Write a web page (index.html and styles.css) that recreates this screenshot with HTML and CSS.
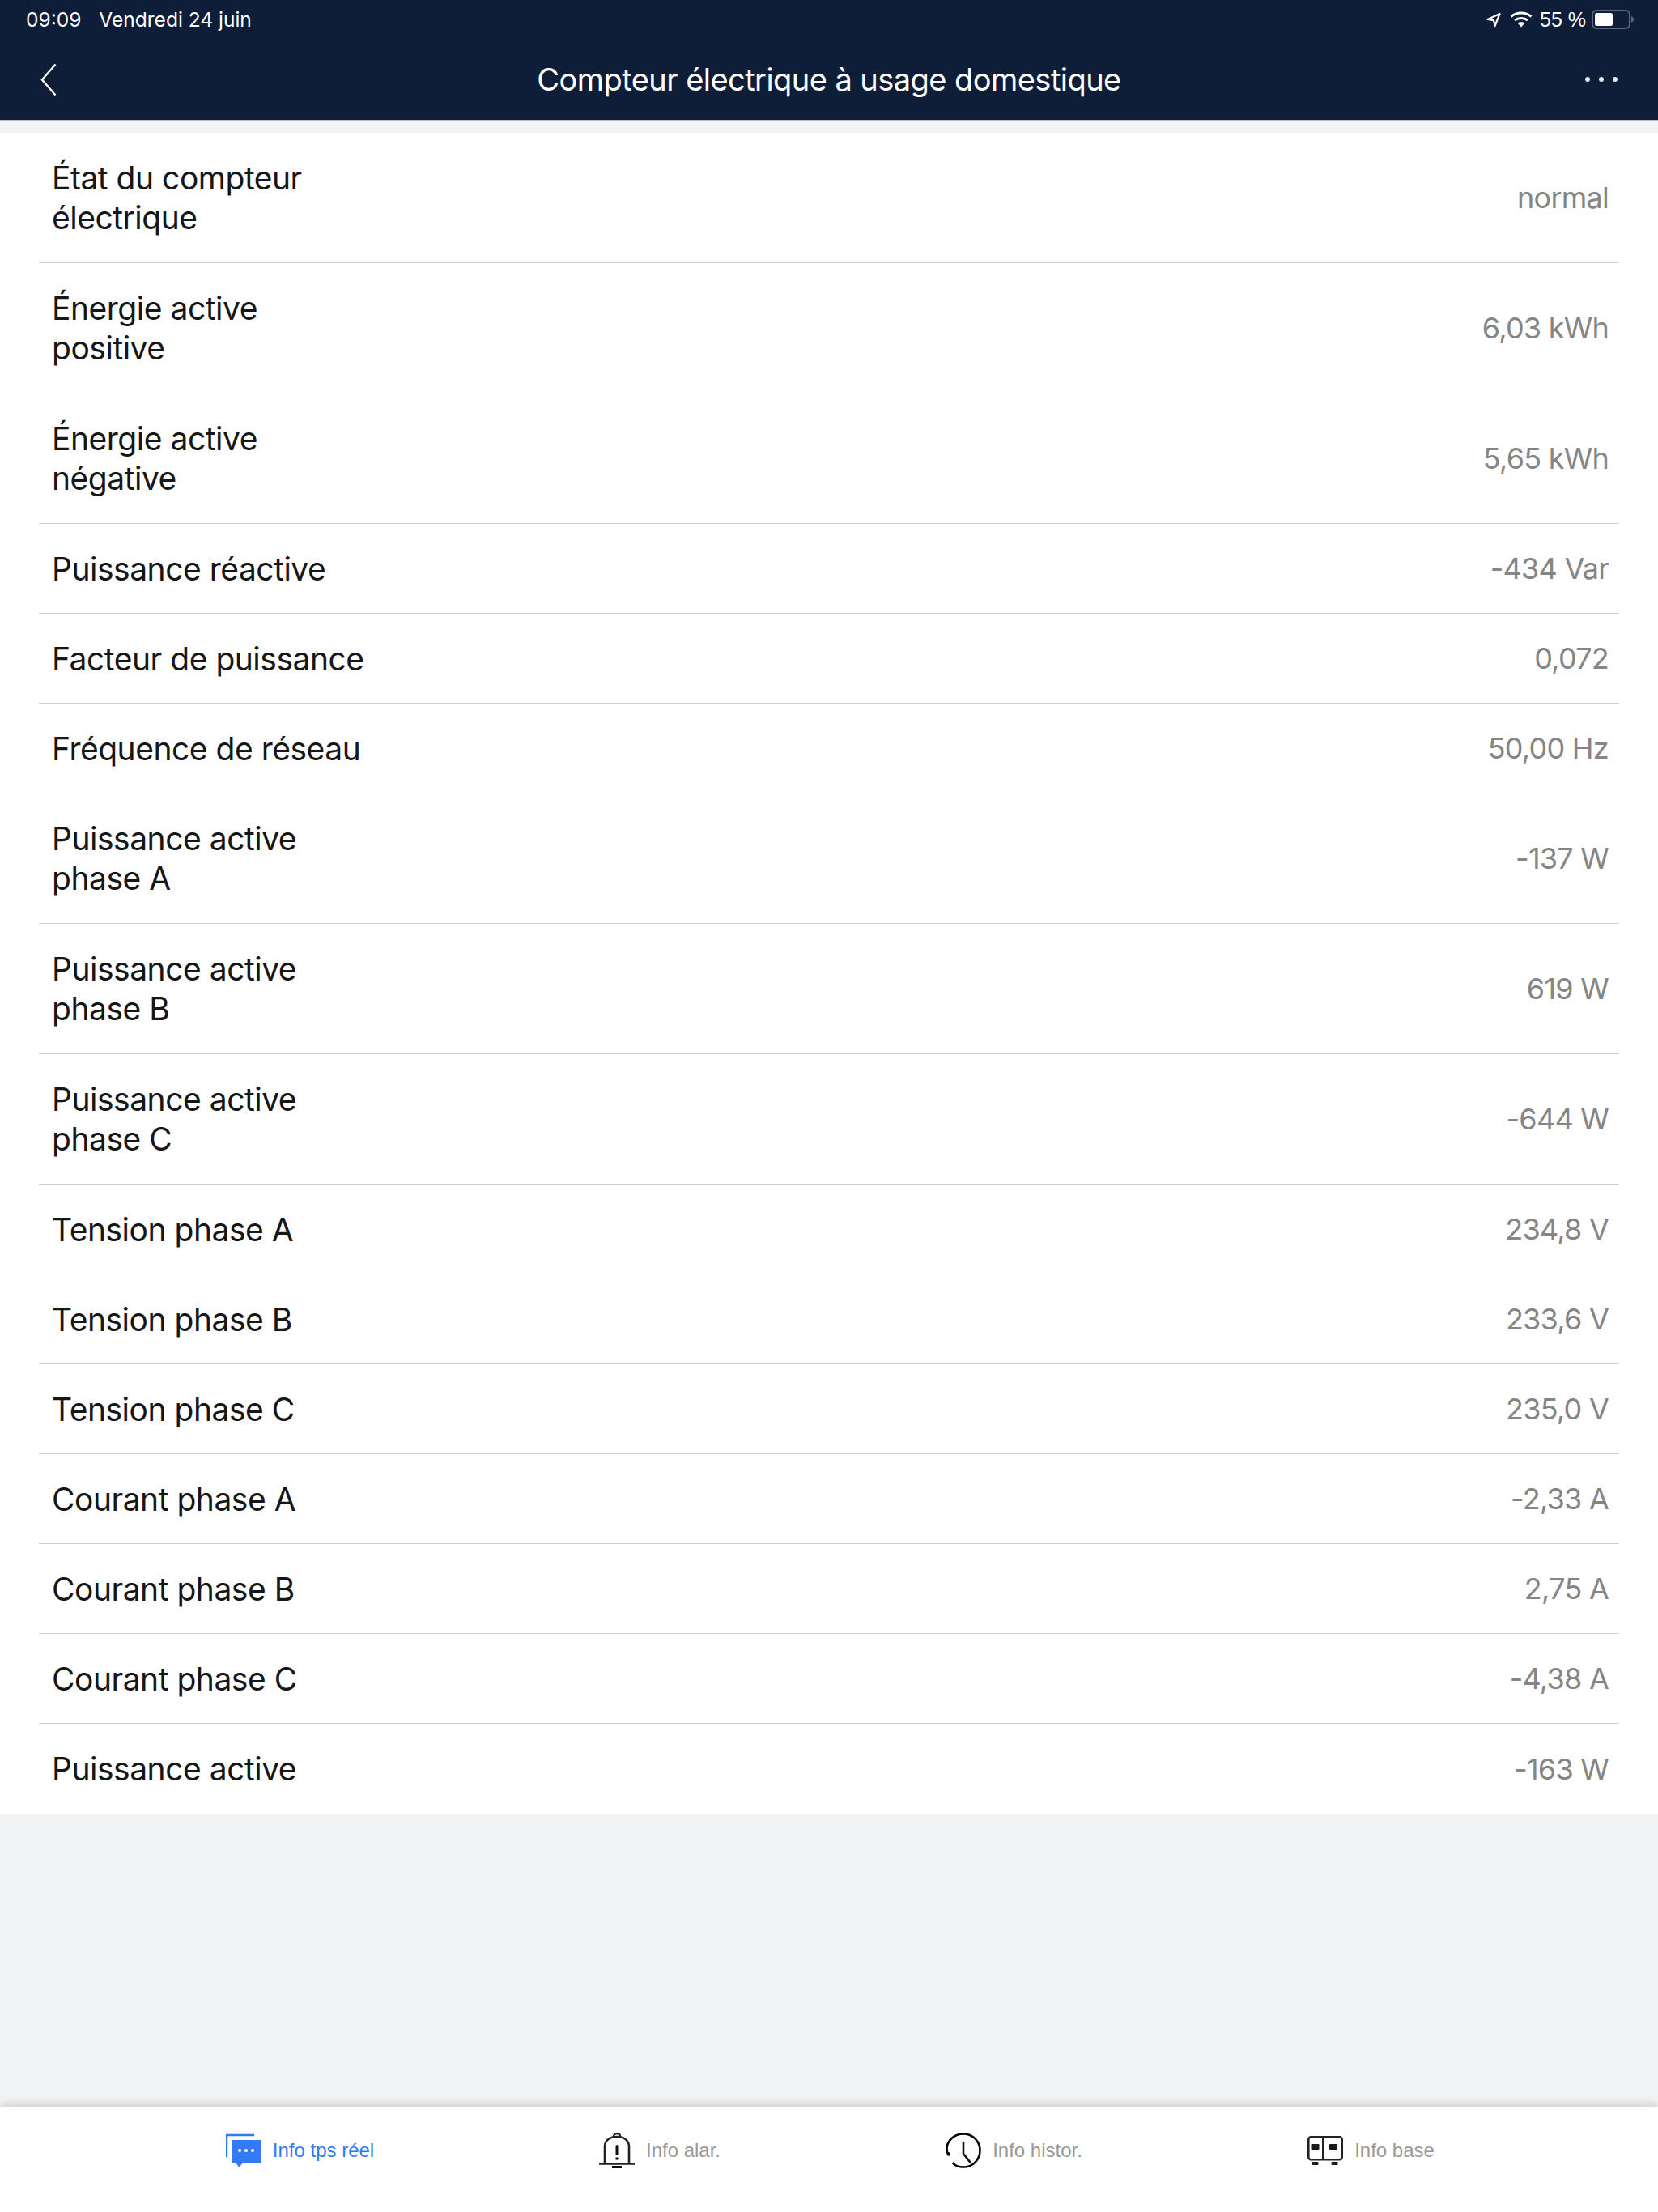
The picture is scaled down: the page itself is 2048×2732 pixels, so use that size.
FILE: index.html
```html
<!DOCTYPE html>
<html lang="fr">
<head>
    <meta charset="UTF-8">
    <meta name="viewport" content="width=device-width, initial-scale=1.0">
    <title>Compteur électrique à usage domestique</title>
    <link rel="stylesheet" href="styles.css">
</head>
<body>
    <div class="app">
        <header class="top">
            <div class="status-bar">
                <div class="status-left">
                    <span>09:09</span>
                    <span>Vendredi 24 juin</span>
                </div>
                <div class="status-right">
                    <svg class="ico-location" width="18" height="19" viewBox="0 0 18 19"><path d="M1.5 9 16.5 2 10.5 17 9 10.2Z" fill="none" stroke="#fff" stroke-width="2.2" stroke-linejoin="round"/></svg>
                    <svg class="ico-wifi" width="28" height="20" viewBox="0 0 28 20"><path d="M1.5 6.5C8.5 .5 19.5 .5 26.5 6.5M6 11C10.500 7.500 17.500 7.500 22 11" fill="none" stroke="#fff" stroke-width="3"/><path d="M9.500 14.500C12 12.700 16 12.700 18.500 14.500L14 19.500Z" fill="#fff"/></svg>
                    <span class="battery-text">55 %</span>
                    <svg class="ico-battery" width="52" height="24" viewBox="0 0 52 24"><rect x="1" y="1" width="46" height="22" rx="5" fill="none" stroke="#5d6880" stroke-width="2"/><rect x="4" y="4" width="22" height="16" rx="2.500" fill="#fff"/><path d="M49 8C51 9 52 10.500 52 12S51 15 49 16Z" fill="#5d6880"/></svg>
                </div>
            </div>
            <nav class="nav-bar">
                <svg class="ico-back" width="20" height="41" viewBox="0 0 20 41"><path d="M18.500 1.500 2 20.500 18.500 39.500" fill="none" stroke="#fff" stroke-width="2.400"/></svg>
                <h1>Compteur électrique à usage domestique</h1>
                <div class="more"><i></i><i></i><i></i></div>
            </nav>
        </header>

        <main class="content">
            <ul class="info-list">
                <li class="tall"><span class="label">État du compteur<br>électrique</span><span class="value">normal</span></li>
                <li class="tall"><span class="label">Énergie active<br>positive</span><span class="value">6,03 kWh</span></li>
                <li class="tall"><span class="label">Énergie active<br>négative</span><span class="value">5,65 kWh</span></li>
                <li><span class="label">Puissance réactive</span><span class="value">-434 Var</span></li>
                <li><span class="label">Facteur de puissance</span><span class="value">0,072</span></li>
                <li><span class="label">Fréquence de réseau</span><span class="value">50,00 Hz</span></li>
                <li class="tall"><span class="label">Puissance active<br>phase A</span><span class="value">-137 W</span></li>
                <li class="tall"><span class="label">Puissance active<br>phase B</span><span class="value">619 W</span></li>
                <li class="tall"><span class="label">Puissance active<br>phase C</span><span class="value">-644 W</span></li>
                <li><span class="label">Tension phase A</span><span class="value">234,8 V</span></li>
                <li><span class="label">Tension phase B</span><span class="value">233,6 V</span></li>
                <li><span class="label">Tension phase C</span><span class="value">235,0 V</span></li>
                <li><span class="label">Courant phase A</span><span class="value">-2,33 A</span></li>
                <li><span class="label">Courant phase B</span><span class="value">2,75 A</span></li>
                <li><span class="label">Courant phase C</span><span class="value">-4,38 A</span></li>
                <li><span class="label">Puissance active</span><span class="value">-163 W</span></li>
            </ul>
        </main>

        <footer class="tab-bar">
            <div class="tab active">
                <svg width="44" height="44" viewBox="0 0 44 44"><path d="M1 30V3H35" fill="none" stroke="#3479f6" stroke-width="2.400"/><path d="M7 9H44V37H21L16.500 43 12 37H7Z" fill="#3479f6"/><circle cx="17" cy="22" r="2" fill="#fff"/><circle cx="25" cy="22" r="2" fill="#fff"/><circle cx="33" cy="22" r="2" fill="#fff"/></svg>
                <span>Info tps réel</span>
            </div>
            <div class="tab tab-alarm">
                <svg width="44" height="44" viewBox="0 0 44 44"><path d="M7 39V17C7 9 14 5 22 5S37 9 37 17V39" fill="none" stroke="#222" stroke-width="2.600"/><path d="M18 5C18 2 20 1 22 1S26 2 26 5" fill="none" stroke="#222" stroke-width="2.400"/><path d="M0 38.500H44" stroke="#222" stroke-width="2.600"/><rect x="16" y="41" width="12" height="3" fill="#111"/><rect x="20.500" y="15" width="3" height="13" rx="1.500" fill="#111"/><circle cx="22" cy="32" r="1.800" fill="#111"/></svg>
                <span>Info alar.</span>
            </div>
            <div class="tab">
                <svg width="44" height="44" viewBox="0 0 44 44"><path d="M3.500 28C2 25 1.500 23 1.500 20.500 1.500 10 10.500 1.500 22 1.500S42.500 10.500 42.500 22 33.500 42.500 22 42.500C16.500 42.500 11.500 41 8.500 37" fill="none" stroke="#000" stroke-width="2.600"/><path d="M1 24 4 29.500 6 24.500Z" fill="#000"/><path d="M22 12V26L30 36" fill="none" stroke="#111" stroke-width="2.600" stroke-linecap="round"/></svg>
                <span>Info histor.</span>
            </div>
            <div class="tab">
                <svg width="44" height="36" viewBox="0 0 44 36"><rect x="1.300" y="1.300" width="41.400" height="28" rx="3" fill="none" stroke="#222" stroke-width="2.600"/><path d="M19 1V30" stroke="#222" stroke-width="2"/><rect x="4.500" y="10" width="10" height="7" rx="1" fill="#1a1a1a"/><rect x="27" y="10" width="10" height="7" rx="1" fill="#1a1a1a"/><rect x="5.500" y="32" width="8" height="4" rx="1" fill="#1a1a1a"/><rect x="29.500" y="32" width="8" height="4" rx="1" fill="#1a1a1a"/></svg>
                <span>Info base</span>
            </div>
        </footer>
    </div>
</body>
</html>
```

FILE: styles.css
```css
* {
    box-sizing: border-box;
}

body {
    margin: 0;
    background-color: #f2f3f5;
    font-family: 'Inter', 'Liberation Sans', sans-serif;
}

.app {
    display: flex;
    flex-direction: column;
    height: 2732px;
}

.top {
    height: 149px;
    background-color: #0e1e38;
    border-bottom: 1px solid #b9bcc1;
    color: white;
}

.status-bar {
    display: flex;
    justify-content: space-between;
    align-items: center;
    height: 48px;
    padding: 0 30px 0 32px;
    font-size: 24.5px;
}

.status-left {
    display: flex;
    gap: 22px;
}

.status-right {
    display: flex;
    align-items: center;
}

.ico-location {
    margin-right: 11px;
}

.ico-wifi {
    margin-right: 9px;
}

.battery-text {
    font-family: 'Liberation Sans', sans-serif;
    font-size: 25px;
    margin-right: 7px;
}

.nav-bar {
    display: grid;
    grid-template-columns: 1fr auto 1fr;
    align-items: center;
    height: 100px;
    padding: 0 50px;
}

.nav-bar h1 {
    margin: 0;
    font-size: 38px;
    font-weight: 400;
    letter-spacing: -0.55px;
}

.more {
    display: flex;
    justify-content: flex-end;
    gap: 11px;
}

.more i {
    width: 6px;
    height: 6px;
    border-radius: 50%;
    background-color: #e4e6ea;
}

.content {
    flex: 1;
    padding-top: 15px;
}

.info-list {
    list-style: none;
    margin: 0;
    padding: 0 48px;
    background-color: white;
}

.info-list li {
    display: flex;
    justify-content: space-between;
    align-items: center;
    height: 111px;
    padding: 0 13px 0 16px;
    border-bottom: 1px solid #d0d1d3;
}

.info-list li.tall {
    height: 161px;
}

.info-list li:last-child {
    border-bottom: none;
}

.label {
    color: #161616;
    font-size: 39px;
    letter-spacing: -0.48px;
    line-height: 49px;
}

.value {
    color: #858585;
    font-size: 36px;
    letter-spacing: -0.75px;
}

.tab-bar {
    display: grid;
    grid-template-columns: repeat(4, 441px);
    justify-content: center;
    align-items: center;
    height: 130px;
    padding: 0 0 22px 16px;
    background-color: white;
    box-shadow: 0 -4px 10px rgba(0, 0, 0, 0.14);
}

.tab {
    display: flex;
    justify-content: center;
    align-items: center;
    gap: 14px;
    font-family: 'Liberation Sans', sans-serif;
    font-size: 24px;
    color: #999999;
}

.tab-alarm {
    padding-left: 7px;
}

.tab.active {
    color: #3479f6;
}
```
